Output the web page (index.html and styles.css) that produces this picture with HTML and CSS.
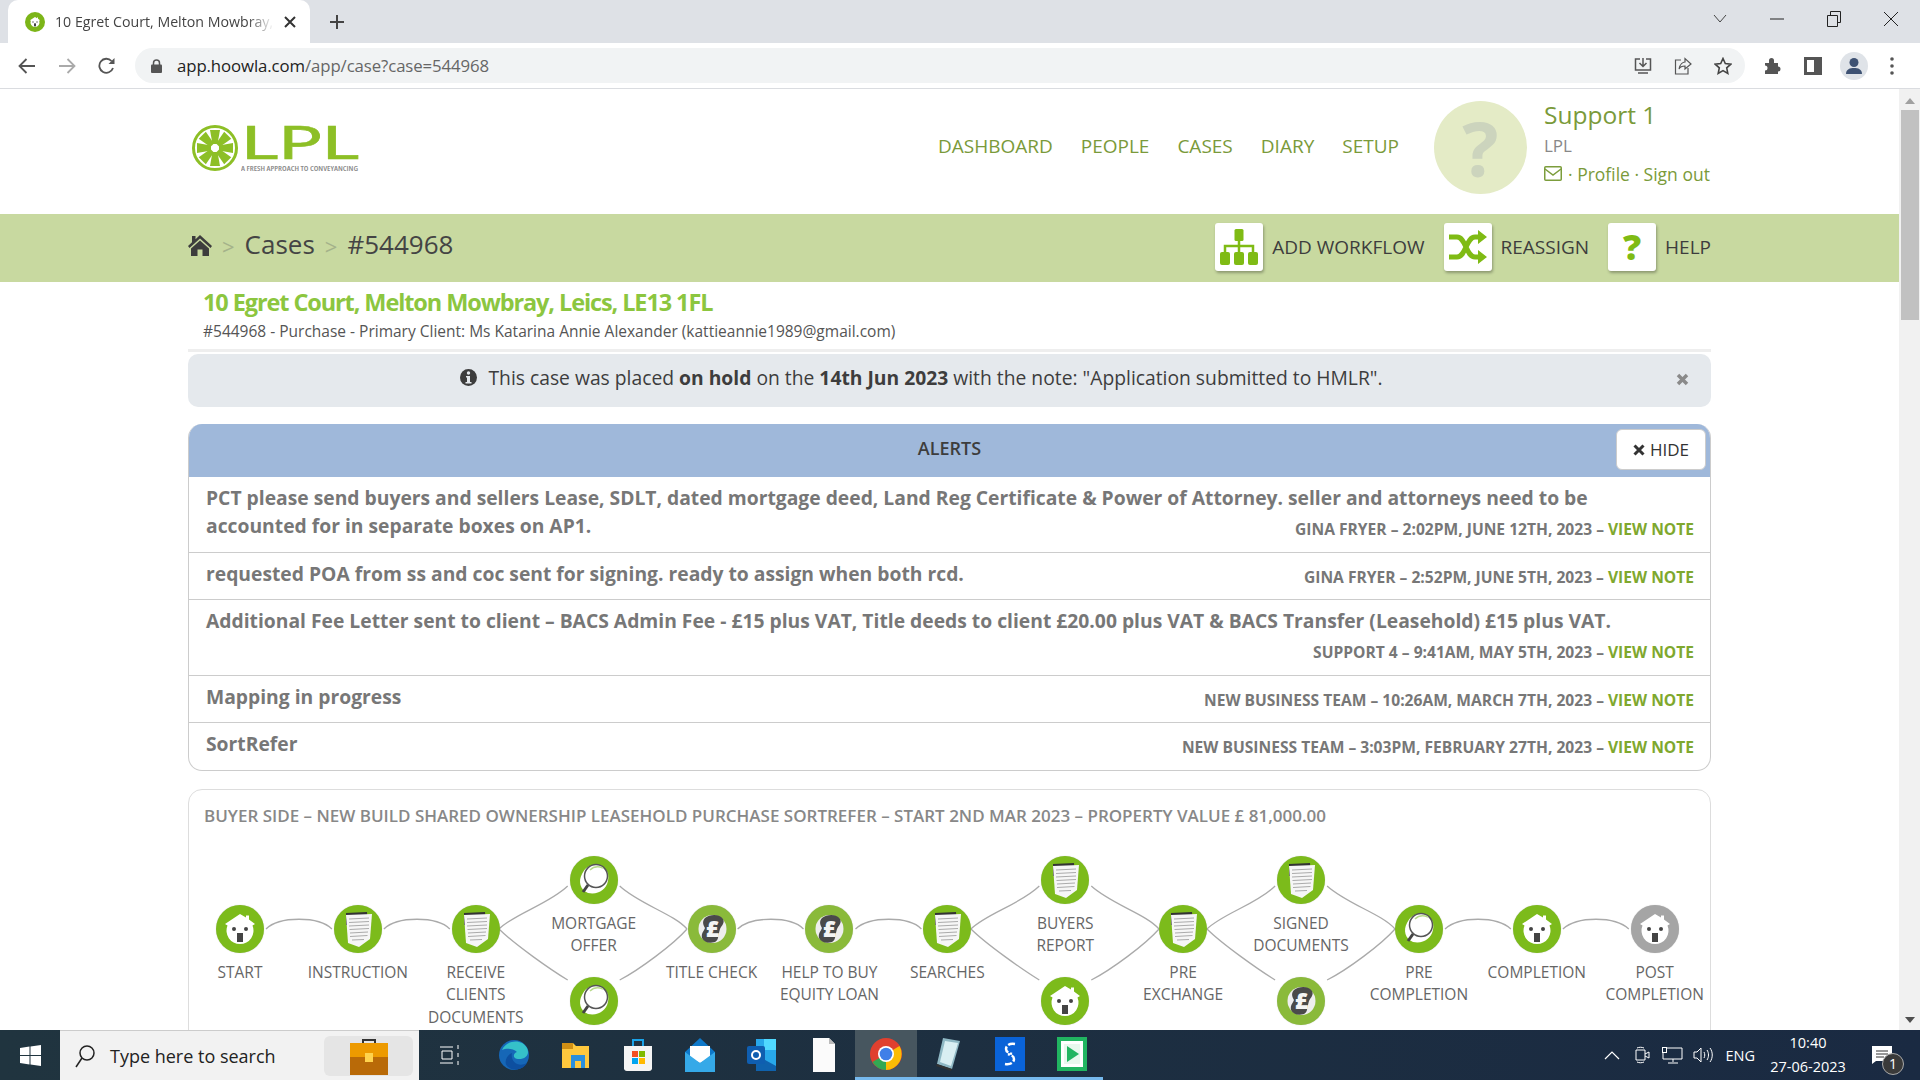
FILE: index.html
```html
<!DOCTYPE html>
<html lang="en">
<head>
    <meta charset="UTF-8">
    <title>10 Egret Court, Melton Mowbray, Leics, LE13 1FL</title>
    <link rel="stylesheet" href="styles.css">
</head>
<body>

    <!-- shared node icons -->
    <svg class="defs" width="0" height="0">
        <symbol id="i-house" viewBox="0 0 48 48">
            <path d="M24 9 30 12.500V10.500H33V14.500L39 19 36.500 20.500A13.500 13.500 0 1 1 11.500 20.500L9 19Z" fill="#fff"/>
            <circle cx="18" cy="24" r="2" fill="#444"/>
            <circle cx="30" cy="24" r="2" fill="#444"/>
            <rect x="21" y="28" width="6" height="9" fill="#444"/>
        </symbol>
        <symbol id="i-doc" viewBox="0 0 48 48">
            <path d="M12 8 33 7 34 20H12Z" fill="#333"/>
            <path d="M12 10 38 9 36 34 25 42 14 38Z" fill="#f6f6f6"/>
            <path d="M15 14 35 13M15 17.500 35 16.500M15 21 35 20M15.500 24.500 35 23.500M16 28 34 27M16 31.500 33.500 30.500M18 35 30 34.500" stroke="#aaa" fill="none"/>
        </symbol>
        <symbol id="i-glass" viewBox="0 0 48 48">
            <path d="M25 9C35 9 40 16 38 25 36 34 28 39 18 37 10 34 8 25 12 18 15 12 19 9 25 9Z" fill="#fff"/>
            <circle cx="26" cy="20" r="11.500" fill="#fff" stroke="#555" stroke-width="1.500"/>
            <path d="M20 14C23 11 28 10 33 12" stroke="#b7d98a" stroke-width="1.500" fill="none"/>
            <path d="M18 29 13 36" stroke="#444" stroke-width="3"/>
        </symbol>
        <symbol id="i-pound" viewBox="0 0 48 48">
            <circle cx="24.500" cy="24" r="14" fill="#eee"/>
            <path d="M17 13C22 9 32 9 35 14 37 18 34 20 32 24 30 30 31 35 27 37 21 39 16 37 14 33 13 28 16 26 17 23 15 20 14 16 17 13Z" fill="#4a4a4a"/>
            <text class="pound" x="24.500" y="32" text-anchor="middle">£</text>
        </symbol>
    </svg>

    <!-- browser chrome -->
    <div class="tabstrip">
        <div class="tab">
            <svg class="favicon" width="20" height="20" viewBox="0 0 20 20"><circle cx="10" cy="10" r="10" fill="#7cb518"/><use href="#i-house" x="2" y="2" width="16" height="16"/></svg>
            <span class="tab-title">10 Egret Court, Melton Mowbray, Leics</span>
            <svg width="12" height="12" viewBox="0 0 12 12"><path d="M1 1 11 11M11 1 1 11" stroke="#333" stroke-width="2"/></svg>
        </div>
        <svg class="newtab" width="16" height="16" viewBox="0 0 16 16"><path d="M8 1V15M1 8H15" stroke="#444" stroke-width="2"/></svg>
        <div class="win-btns">
            <svg width="14" height="10" viewBox="0 0 14 10"><path d="M1 1 7 8 13 1" stroke="#444" fill="none"/></svg>
            <svg width="14" height="2" viewBox="0 0 14 2"><path d="M0 1H14" stroke="#222"/></svg>
            <svg width="14" height="16" viewBox="0 0 14 16"><path d="M.5 4.500H10.500V15.500H.5ZM3.500 4.500V.5H13.500V11.500H10.500" stroke="#222" fill="none"/></svg>
            <svg width="14" height="14" viewBox="0 0 14 14"><path d="M0 0 14 14M14 0 0 14" stroke="#222"/></svg>
        </div>
    </div>

    <div class="toolbar">
        <svg width="18" height="16" viewBox="0 0 18 16"><path d="M17 8H2M8.500 1 1.500 8 8.500 15" stroke="#555" stroke-width="1.800" fill="none"/></svg>
        <svg width="18" height="16" viewBox="0 0 18 16"><path d="M1 8H16M9.500 1 16.500 8 9.500 15" stroke="#aaa" stroke-width="1.800" fill="none"/></svg>
        <svg width="18" height="18" viewBox="0 0 18 18"><path d="M15 11A7 7 0 1 1 13.500 4" stroke="#555" stroke-width="1.800" fill="none"/><path d="M16.500 1V7H10.500Z" fill="#555"/></svg>
        <div class="omnibox">
            <svg width="11" height="14" viewBox="0 0 11 14"><path d="M2.500 6V4A3 3 0 0 1 8.500 4V6" stroke="#555" stroke-width="1.500" fill="none"/><rect y="5.500" width="11" height="8.500" rx="1" fill="#555"/></svg>
            <span class="url"><b>app.hoowla.com</b>/app/case?case=544968</span>
            <span class="omni-icons">
                <svg width="18" height="18" viewBox="0 0 18 18"><path d="M6 2H1.500V13H16.500V2H12M9 1V9M5.500 6 9 9.500 12.500 6M4 16H14" stroke="#555" stroke-width="1.500" fill="none"/></svg>
                <svg width="18" height="18" viewBox="0 0 18 18"><path d="M7 3H1.500V17H14V11M5 12C6 7 9 5 11 5V1.500L17 7 11 12V9C8 9 6 10 5 12Z" stroke="#555" stroke-width="1.200" fill="none"/></svg>
                <svg width="18" height="18" viewBox="0 0 18 18"><path d="M9 1.500 11.300 6.600 16.800 7.200 12.700 10.900 13.800 16.400 9 13.600 4.200 16.400 5.300 10.900 1.200 7.200 6.700 6.600Z" stroke="#444" stroke-width="1.600" fill="none"/></svg>
            </span>
        </div>
        <div class="tool-icons">
            <svg width="18" height="18" viewBox="0 0 18 18"><path d="M1 6H5V3.500A2.500 2.500 0 0 1 10 3.500V6H14V9.500A2.500 2.500 0 0 1 14 14.500V17H1V13.500A2.500 2.500 0 0 0 1 8.500Z" fill="#555"/></svg>
            <svg width="18" height="18" viewBox="0 0 18 18"><path d="M1.500 1.500H16.500V16.500H1.500Z" stroke="#555" stroke-width="3" fill="none"/><rect x="10" y="1" width="7" height="16" fill="#555"/></svg>
            <svg class="profile" width="28" height="28" viewBox="0 0 28 28"><circle cx="14" cy="14" r="14" fill="#dfe3e8"/><circle cx="14" cy="10.500" r="4.500" fill="#3e5273"/><path d="M6 22C6 17 10 16 14 16S22 17 22 22Z" fill="#3e5273"/></svg>
            <svg width="4" height="18" viewBox="0 0 4 18"><circle cx="2" cy="2" r="1.800" fill="#555"/><circle cx="2" cy="9" r="1.800" fill="#555"/><circle cx="2" cy="16" r="1.800" fill="#555"/></svg>
        </div>
    </div>

    <div class="viewport">
        <div class="page">
            <header class="site-head">
                <div class="logo">
                    <svg width="46" height="46" viewBox="0 0 46 46">
                        <circle cx="23" cy="23" r="21.500" fill="#fff" stroke="#8dbf26" stroke-width="3"/>
                        <g fill="#8dbf26">
                            <path d="M20.500 19 18 5H28L25.500 19Z"/>
                            <path d="M20.500 19 18 5H28L25.500 19Z" transform="rotate(45 23 23)"/>
                            <path d="M20.500 19 18 5H28L25.500 19Z" transform="rotate(90 23 23)"/>
                            <path d="M20.500 19 18 5H28L25.500 19Z" transform="rotate(135 23 23)"/>
                            <path d="M20.500 19 18 5H28L25.500 19Z" transform="rotate(180 23 23)"/>
                            <path d="M20.500 19 18 5H28L25.500 19Z" transform="rotate(225 23 23)"/>
                            <path d="M20.500 19 18 5H28L25.500 19Z" transform="rotate(270 23 23)"/>
                            <path d="M20.500 19 18 5H28L25.500 19Z" transform="rotate(315 23 23)"/>
                        </g>
                    </svg>
                    <svg class="logo-text" width="118" height="66" viewBox="0 0 118 66">
                        <text class="logo-name" x="0" y="46" textLength="118" lengthAdjust="spacingAndGlyphs">LPL</text>
                        <text class="logo-tag" x="0" y="58" textLength="117" lengthAdjust="spacingAndGlyphs">A FRESH APPROACH TO CONVEYANCING</text>
                    </svg>
                </div>
                <nav class="mainnav">
                    <a>DASHBOARD</a>
                    <a>PEOPLE</a>
                    <a>CASES</a>
                    <a>DIARY</a>
                    <a>SETUP</a>
                </nav>
                <div class="avatar">?</div>
                <div class="user">
                    <div class="user-name">Support 1</div>
                    <div class="user-org">LPL</div>
                    <div class="user-links">
                        <svg width="18" height="15" viewBox="0 0 18 15"><rect x=".75" y=".75" width="16.500" height="13.500" rx="1" stroke="#7c9d3c" stroke-width="1.500" fill="none"/><path d="M1 3 9 9 17 3" stroke="#7c9d3c" stroke-width="1.500" fill="none"/></svg>
                        <span>· Profile · Sign out</span>
                    </div>
                </div>
            </header>

            <div class="band">
                <div class="wrap band-in">
                    <svg width="24" height="21" viewBox="0 0 24 21"><path d="M12 0 24 11 22.500 13 12 3.500 1.500 13 0 11 4 7.300V1H7.500V4.200Z" fill="#3d3d3d"/><path d="M12 5.500 21 13.500V21H14.500V14.500H9.500V21H3V13.500Z" fill="#3d3d3d"/></svg>
                    <span class="crumb-sep">&gt;</span>
                    <span class="crumb">Cases</span>
                    <span class="crumb-sep">&gt;</span>
                    <span class="crumb">#544968</span>
                    <div class="band-actions">
                        <a class="act">
                            <span class="act-btn"><svg width="38" height="36" viewBox="0 0 38 36"><g fill="#7fbb14"><rect x="14.500" y="0" width="9" height="12" rx="1.500"/><rect x="0" y="23" width="10" height="13" rx="2"/><rect x="14" y="23" width="10" height="13" rx="2"/><rect x="28" y="23" width="10" height="13" rx="2"/></g><path d="M19 12V23M5 23V17H33V23" stroke="#7fbb14" stroke-width="2.500" fill="none"/></svg></span>
                            ADD WORKFLOW
                        </a>
                        <a class="act">
                            <span class="act-btn"><svg width="38" height="34" viewBox="0 0 38 34"><path d="M0 7H8C17 7 17 27 26 27H31M0 27H8C17 27 17 7 26 7H31" stroke="#7fbb14" stroke-width="5" fill="none"/><path d="M29 0 38 7 29 14ZM29 20 38 27 29 34Z" fill="#7fbb14"/></svg></span>
                            REASSIGN
                        </a>
                        <a class="act">
                            <span class="act-btn act-q">?</span>
                            HELP
                        </a>
                    </div>
                </div>
            </div>

            <main class="wrap">
                <div class="case-head">
                    <h1>10 Egret Court, Melton Mowbray, Leics, LE13 1FL</h1>
                    <p>#544968 - Purchase - Primary Client: Ms Katarina Annie Alexander (kattieannie1989@gmail.com)</p>
                </div>

                <div class="hold">
                    <svg width="17" height="17" viewBox="0 0 17 17"><circle cx="8.500" cy="8.500" r="8.500" fill="#3d3d3d"/><circle cx="8.500" cy="4" r="1.700" fill="#e5e9ed"/><path d="M6 7H10V13H11.500V14.500H5.500V13H7V8.500H6Z" fill="#e5e9ed"/></svg>
                    <span>This case was placed <b>on hold</b> on the <b>14th Jun 2023</b> with the note: "Application submitted to HMLR".</span>
                    <svg class="hold-x" width="13" height="13" viewBox="0 0 13 13"><path d="M2 2 11 11M11 2 2 11" stroke="#8a8a8a" stroke-width="3.500"/></svg>
                </div>

                <section class="alerts">
                    <div class="alerts-head">
                        ALERTS
                        <button class="hide-btn"><svg width="12" height="12" viewBox="0 0 12 12"><path d="M1.500 1.500 10.500 10.500M10.500 1.500 1.500 10.500" stroke="#333" stroke-width="3"/></svg> HIDE</button>
                    </div>
                    <div class="alert-row">PCT please send buyers and sellers Lease, SDLT, dated mortgage deed, Land Reg Certificate &amp; Power of Attorney. seller and attorneys need to be<br>accounted for in separate boxes on AP1.<span class="alert-meta">GINA FRYER – 2:02PM, JUNE 12TH, 2023 – <a>VIEW NOTE</a></span></div>
                    <div class="alert-row">requested POA from ss and coc sent for signing. ready to assign when both rcd.<span class="alert-meta">GINA FRYER – 2:52PM, JUNE 5TH, 2023 – <a>VIEW NOTE</a></span></div>
                    <div class="alert-row">Additional Fee Letter sent to client – BACS Admin Fee - £15 plus VAT, Title deeds to client £20.00 plus VAT &amp; BACS Transfer (Leasehold) £15 plus VAT.<span class="alert-meta">SUPPORT 4 – 9:41AM, MAY 5TH, 2023 – <a>VIEW NOTE</a></span></div>
                    <div class="alert-row">Mapping in progress<span class="alert-meta">NEW BUSINESS TEAM – 10:26AM, MARCH 7TH, 2023 – <a>VIEW NOTE</a></span></div>
                    <div class="alert-row">SortRefer<span class="alert-meta">NEW BUSINESS TEAM – 3:03PM, FEBRUARY 27TH, 2023 – <a>VIEW NOTE</a></span></div>
                </section>

                <section class="workflow">
                    <h2>BUYER SIDE – NEW BUILD SHARED OWNERSHIP LEASEHOLD PURCHASE SORTREFER – START 2ND MAR 2023 – PROPERTY VALUE £ 81,000.00</h2>
                    <div class="diagram">
                        <svg class="links" width="1521" height="170" viewBox="0 0 1521 170">
                            <path d="M77 73C90 60 130 60 142.900 73M194.900 73C208 60 248 60 260.800 73M548.600 73C562 60 602 60 614.500 73M666.500 73C680 60 720 60 732.400 73M1256 73C1270 60 1308 60 1321.900 73M1373.900 73C1388 60 1426 60 1439.800 73"/>
                            <path d="M310 73C325 58 360 48 378.700 30M430.700 30C450 48 485 58 498 73M310 73C325 88 362 114 378.700 124M430.700 124C450 114 485 88 498 73"/>
                            <path d="M782 73C797 58 832 48 850.300 30M902.300 30C922 48 957 58 970 73M782 73C797 88 834 114 850.300 124M902.300 124C922 114 957 88 970 73"/>
                            <path d="M1018 73C1033 58 1068 48 1086.100 30M1138.100 30C1158 48 1193 58 1206 73M1018 73C1033 88 1070 114 1086.100 124M1138.100 124C1158 114 1193 88 1206 73"/>
                        </svg>
                        <div class="step"><svg class="node"><use href="#i-house"/></svg><span>START</span></div>
                        <div class="step"><svg class="node"><use href="#i-doc"/></svg><span>INSTRUCTION</span></div>
                        <div class="step"><svg class="node"><use href="#i-doc"/></svg><span>RECEIVE CLIENTS DOCUMENTS</span></div>
                        <div class="step split"><svg class="node"><use href="#i-glass"/></svg><span>MORTGAGE OFFER</span><svg class="node"><use href="#i-glass"/></svg></div>
                        <div class="step"><svg class="node olive"><use href="#i-pound"/></svg><span>TITLE CHECK</span></div>
                        <div class="step"><svg class="node olive"><use href="#i-pound"/></svg><span>HELP TO BUY EQUITY LOAN</span></div>
                        <div class="step"><svg class="node"><use href="#i-doc"/></svg><span>SEARCHES</span></div>
                        <div class="step split"><svg class="node"><use href="#i-doc"/></svg><span>BUYERS REPORT</span><svg class="node"><use href="#i-house"/></svg></div>
                        <div class="step"><svg class="node"><use href="#i-doc"/></svg><span>PRE EXCHANGE</span></div>
                        <div class="step split"><svg class="node"><use href="#i-doc"/></svg><span>SIGNED DOCUMENTS</span><svg class="node olive"><use href="#i-pound"/></svg></div>
                        <div class="step"><svg class="node"><use href="#i-glass"/></svg><span>PRE COMPLETION</span></div>
                        <div class="step"><svg class="node"><use href="#i-house"/></svg><span>COMPLETION</span></div>
                        <div class="step"><svg class="node grey"><use href="#i-house"/></svg><span>POST COMPLETION</span></div>
                    </div>
                </section>
            </main>
        </div>
        <div class="scrollbar">
            <svg width="10" height="6" viewBox="0 0 10 6"><path d="M5 0 10 6H0Z" fill="#a0a0a0"/></svg>
            <div class="thumb"></div>
            <svg width="10" height="6" viewBox="0 0 10 6"><path d="M5 6 0 0H10Z" fill="#505050"/></svg>
        </div>
    </div>

    <!-- windows taskbar -->
    <footer class="taskbar">
        <svg class="start" width="21" height="21" viewBox="0 0 21 21"><path d="M0 3 9.500 1.600V10H0ZM10.500 1.500 21 0V10H10.500ZM0 11H9.500V19.400L0 18ZM10.500 11H21V21L10.500 19.500Z" fill="#fff"/></svg>
        <div class="search">
            <svg width="22" height="24" viewBox="0 0 22 24"><circle cx="13" cy="9" r="7" stroke="#222" stroke-width="1.500" fill="none"/><path d="M8 14 2 23" stroke="#222" stroke-width="1.500"/></svg>
            <span>Type here to search</span>
            <div class="search-promo">
                <svg width="38" height="38" viewBox="0 0 38 38"><path d="M13 7V3H25V7" stroke="#333" stroke-width="2" fill="none"/><rect y="6" width="38" height="14" fill="#ed9a00"/><rect y="20" width="38" height="18" fill="#b96a08"/><rect x="15" y="16" width="8" height="9" fill="#ffd34d"/></svg>
            </div>
        </div>
        <div class="tasks">
            <span class="task"><svg width="22" height="22" viewBox="0 0 22 22"><path d="M1 3H14M1 19H14M3 7H13V15H3ZM19 1V5M19 9V13M19 17V21" stroke="#fff" fill="none"/></svg></span>
            <span class="task"><svg width="32" height="32" viewBox="0 0 32 32"><circle cx="16" cy="16" r="15" fill="#1667b7"/><path d="M4 11C8 1 24-1 29 9 32 15 28 20 21 20 14 20 15 14 19 13 15 9 8 9 4 11Z" fill="#35c1c9"/><path d="M14 14C12 22 20 29 29 24 25 31 15 33 9 27 6 24 8 16 14 14Z" fill="#0d4fa0"/></svg></span>
            <span class="task"><svg width="30" height="30" viewBox="0 0 30 30"><path d="M1 3H12L15 6H28V28H1Z" fill="#ffc83d"/><path d="M1 3H12V9H1Z" fill="#d18f14"/><rect x="10" y="15" width="14" height="13" fill="#2b8fdd"/><rect x="14" y="21" width="6" height="7" fill="#ffc83d"/></svg></span>
            <span class="task"><svg width="30" height="34" viewBox="0 0 30 34"><path d="M10 8V2H20V8" stroke="#1aa3e8" stroke-width="2" fill="none"/><path d="M1 8H29V31A3 3 0 0 1 26 33H4A3 3 0 0 1 1 31Z" fill="#f4f4f4"/><rect x="9" y="13" width="6" height="6" fill="#f25022"/><rect x="16" y="13" width="6" height="6" fill="#7fba00"/><rect x="9" y="20" width="6" height="6" fill="#00a4ef"/><rect x="16" y="20" width="6" height="6" fill="#ffb900"/></svg></span>
            <span class="task"><svg width="30" height="34" viewBox="0 0 30 34"><path d="M15 0 30 14V34H0V14Z" fill="#0e78c9"/><path d="M5 8H25V20L15 25 5 20Z" fill="#fff"/><path d="M0 14 15 25 30 14V34H0Z" fill="#35a9e8"/></svg></span>
            <span class="task"><svg width="30" height="34" viewBox="0 0 30 34"><path d="M9 1H29V33H9Z" fill="#28a8ea"/><path d="M17 1H29V12H17Z" fill="#50d9ff"/><path d="M9 17 29 28V33H9Z" fill="#0f62ad"/><rect y="8" width="18" height="18" rx="2" fill="#0f5eb0"/><circle cx="9" cy="17" r="4" stroke="#fff" stroke-width="2" fill="none"/></svg></span>
            <span class="task"><svg width="22" height="34" viewBox="0 0 22 34"><path d="M0 0H16L22 6V34H0Z" fill="#fbfbfb"/><path d="M16 0V6H22Z" fill="#bbb"/></svg></span>
            <span class="task active"><svg width="32" height="32" viewBox="0 0 32 32"><circle cx="16" cy="16" r="16" fill="#e0402f"/><path d="M16 16 2.500 24A16 16 0 0 0 16 32Z" fill="#33a853"/><path d="M16 16 29.500 8A16 16 0 0 1 16 32Z" fill="#fbbc05"/><circle cx="16" cy="16" r="8" fill="#fff"/><circle cx="16" cy="16" r="6.300" fill="#3f7fe8"/></svg></span>
            <span class="task open"><svg width="26" height="34" viewBox="0 0 26 34"><path d="M8 1 25 4 17 32 2 27Z" fill="#8fb8c4"/><path d="M10 4 23 6 16 29 5 25Z" fill="#d9eef2"/><path d="M2 27 17 32 16 34 1 29Z" fill="#333"/></svg></span>
            <span class="task open"><svg width="30" height="34" viewBox="0 0 30 34"><rect width="30" height="34" fill="#0a63d8"/><path d="M20 7C14 6 11 9 11 12 11 15 14 16 17 17M10 27C16 28 19 25 19 22 19 19 16 18 13 17" stroke="#fff" stroke-width="2.500" stroke-dasharray="7 2" fill="none"/></svg></span>
            <span class="task open"><svg width="30" height="34" viewBox="0 0 30 34"><rect width="30" height="34" fill="#21b561"/><rect x="4" y="4" width="22" height="26" fill="#fff"/><rect x="7" y="7" width="16" height="20" fill="#e8f8ee"/><path d="M10 9 22 17 10 25Z" fill="#21b561"/></svg></span>
        </div>
        <div class="tray">
            <svg class="tr-chev" width="16" height="10" viewBox="0 0 16 10"><path d="M1 9 8 2 15 9" stroke="#fff" stroke-width="1.200" fill="none"/></svg>
            <svg class="tr-cam" width="15" height="18" viewBox="0 0 15 18"><path d="M1 4H10V14H1ZM10 8 14 6V12L10 10M2 2C4 1 7 1 9 2M2 16C4 17 7 17 9 16" stroke="#fff" fill="none"/></svg>
            <svg class="tr-net" width="21" height="17" viewBox="0 0 21 17"><path d="M4 1H20V12H1V5M11 12V15M6 16H16" stroke="#fff" fill="none"/><rect x=".5" y=".5" width="4" height="5" stroke="#fff" fill="#1a2c42"/></svg>
            <svg class="tr-vol" width="20" height="16" viewBox="0 0 20 16"><path d="M1 5H4L8 1V15L4 11H1ZM11 5C12 7 12 9 11 11M14 3C16 6 16 10 14 13M17 1C20 5 20 11 17 15" stroke="#fff" fill="none"/></svg>
            <span class="tr-lang">ENG</span>
            <div class="clock"><span>10:40</span><span>27-06-2023</span></div>
            <div class="notif">
                <svg width="20" height="18" viewBox="0 0 20 18"><path d="M0 0H20V15H4L0 18Z" fill="#fff"/><path d="M4 5H16M4 8H16M4 11H12" stroke="#333"/></svg>
                <span class="notif-count">1</span>
            </div>
        </div>
    </footer>

</body>
</html>
```

FILE: styles.css
```css
html, body { margin: 0; height: 100%; overflow: hidden; }
body { display: flex; flex-direction: column; font-family: "Open Sans", sans-serif; color: #555; background: #fff; }
svg { flex: none; display: block; }
a { text-decoration: none; }
.defs { position: absolute; }
.pound { font: 800 23px "Open Sans", sans-serif; fill: #f4f4f4; }

/* browser chrome */
.tabstrip { height: 43px; flex: none; background: #dee1e6; display: flex; align-items: flex-end; position: relative; }
.tab { width: 302px; height: 43px; margin-left: 8px; box-sizing: border-box; padding: 0 14px 0 17px; background: #fff; border-radius: 10px 10px 0 0; display: flex; align-items: center; gap: 10px; }
.tab-title { flex: 1; font-size: 14.200px; color: #444; white-space: nowrap; overflow: hidden; -webkit-mask-image: linear-gradient(90deg, #000 88%, transparent); mask-image: linear-gradient(90deg, #000 88%, transparent); }
.newtab { margin: 0 0 13px 19px; }
.win-btns { margin-left: auto; height: 38px; align-self: flex-start; display: flex; align-items: center; gap: 43px; padding-right: 22px; }
.toolbar { height: 46px; flex: none; box-sizing: border-box; background: #fff; border-bottom: 1px solid #dadce0; display: flex; align-items: center; padding: 0 0 0 18px; gap: 22px; }
.omnibox { width: 1610px; height: 35px; margin-left: -3px; box-sizing: border-box; background: #f1f3f4; border-radius: 18px; display: flex; align-items: center; padding: 0 13px 0 16px; gap: 15px; }
.url { font-size: 16.800px; color: #666; letter-spacing: -.1px; }
.url b { font-weight: 400; color: #222; }
.omni-icons { margin-left: auto; display: flex; gap: 22px; }
.tool-icons { margin-left: -3px; display: flex; align-items: center; gap: 22px; }
.tool-icons .profile { margin: 0 0 0 -4px; }

/* page */
.viewport { flex: 1; min-height: 0; display: flex; }
.page { flex: 1; min-width: 0; overflow: hidden; }
.scrollbar { width: 21px; flex: none; background: #f1f1f1; display: flex; flex-direction: column; align-items: center; justify-content: space-between; padding: 9px 0 7px; box-sizing: border-box; }
.thumb { width: 18px; height: 210px; margin-top: 6px; margin-bottom: auto; background: #c1c1c1; }
.wrap { width: 1523px; margin: 0 auto; }

.site-head { width: 1523px; height: 125px; margin: 0 auto; display: flex; align-items: center; }
.logo { display: flex; margin: 0 0 0 4px; gap: 3px; align-items: flex-start; }
.logo-text { margin-top: -12px; }
.logo-name { font: 400 47px Lato, sans-serif; fill: #8dbf26; stroke: #8dbf26; stroke-width: .6px; }
.logo-tag { font: 600 7.500px "Open Sans", sans-serif; font-stretch: 75%; fill: #8a8a8a; }
.mainnav { margin: 0 35px 12px auto; display: flex; gap: 28px; }
.mainnav a { font-size: 19px; color: #7a9a3a; }
.avatar { width: 93px; height: 93px; border-radius: 50%; background: #e4ebc6; color: #ccd4bd; font: 700 76px/93px "Open Sans", sans-serif; text-align: center; margin: 0 17px 8px 0; }
.user { width: 167px; color: #7a9a3a; margin-bottom: 18px; }
.user-name { font-size: 24.500px; line-height: 34px; }
.user-org { font-size: 17px; line-height: 28px; color: #888; }
.user-links { display: flex; align-items: center; gap: 6px; font-size: 17.500px; line-height: 28px; }

.band { height: 68px; background: #c8d9a0; }
.band-in { height: 100%; display: flex; align-items: center; color: #3d3d3d; }
.band-in > svg { margin-bottom: 5px; }
.crumb { font-size: 26px; margin-bottom: 8px; margin-left: 1px; color: #444; }
.crumb-sep { font-size: 22px; color: #a4b28a; margin: 0 9px 5px 10px; }
.band-actions { margin-left: auto; display: flex; gap: 19px; }
.act { display: flex; align-items: center; gap: 9px; font-size: 19px; color: #3d3d3d; padding-bottom: 3px; }
.act-btn { width: 48px; height: 48px; border-radius: 3px; background: #fff; box-shadow: 1px 2px 3px rgba(0,0,0,.3); display: flex; align-items: center; justify-content: center; }
.act-q { font: 800 36px/48px "Open Sans", sans-serif; color: #7fbb14; }

.case-head { padding: 0 15px; height: 67px; border-bottom: 3px solid #eee; box-sizing: content-box; }
.case-head h1 { margin: 0; padding-top: 4px; font-size: 23.500px; line-height: 33px; font-weight: 700; letter-spacing: -1.100px; color: #8cc63f; white-space: nowrap; }
.case-head p { margin: 0; font-size: 15.500px; line-height: 24px; color: #555; }
.hold { position: relative; margin-top: 2px; height: 53px; background: #e5e9ed; border-radius: 10px; display: flex; align-items: center; justify-content: center; gap: 11px; font-size: 19.300px; color: #3d3d3d; padding: 0 56px 6px 0; box-sizing: border-box; }
.hold-x { position: absolute; right: 22px; top: 19px; }

.alerts { margin-top: 17px; border: 1px solid #ccc; border-top: 0; border-radius: 14px; overflow: hidden; }
.alerts-head { height: 53px; position: relative; background: #9fb8da; text-align: center; font-size: 18px; font-weight: 600; line-height: 48px; color: #3d3d3d; }
.hide-btn { position: absolute; right: 4px; top: 5px; height: 41px; width: 90px; padding: 0; border: 1px solid #ccc; border-radius: 6px; background: #fff; font: 400 17px "Open Sans", sans-serif; color: #333; display: flex; align-items: center; justify-content: center; gap: 5px; }
.alert-row { display: flow-root; padding: 7px 16px 11.500px 17px; font-size: 19.300px; line-height: 28px; font-weight: 700; color: #777; border-top: 1px solid #ccc; }
.alerts-head + .alert-row { border-top: 0; }
.alert-meta { float: right; font-size: 15.600px; font-weight: 700; line-height: 28px; color: #777; margin: 3px 0 -3px 12px; }
.alert-meta a { color: #7fa82e; }

.workflow { margin-top: 18px; height: 300px; border: 1px solid #ddd; border-radius: 14px; }
.workflow h2 { margin: 0; padding: 14px 15px 0; font-size: 17px; line-height: 24px; font-weight: 600; color: #888; }
.diagram { position: relative; margin: 28px 0 0 -1px; display: grid; grid-template-columns: repeat(13, 104px); column-gap: 13.900px; align-items: start; }
.links { position: absolute; left: 1px; top: 0; overflow: visible; }
.links path { fill: none; stroke: #aaa; stroke-width: 1.300; }
.step { position: relative; display: flex; flex-direction: column; align-items: center; padding-top: 49px; text-align: center; font-size: 15.500px; line-height: 22.500px; color: #666; }
.step.split { padding-top: 0; }
.step span { margin-top: 8px; }
.step.split .node + span + .node { margin-top: 20px; }
.node { width: 48px; height: 48px; border-radius: 50%; background: #7cbb1b; box-shadow: 0 0 1px rgba(0,0,0,.25); }
.node.olive { background: #8aba3a; }
.node.grey { background: #a5a5a5; }

/* windows taskbar */
.taskbar { height: 50px; flex: none; display: flex; align-items: center; background: linear-gradient(90deg, #20343f, #1a2a42); color: #fff; }
.start { margin: 0 19px 0 20px; }
.search { width: 359px; height: 50px; box-sizing: border-box; background: #f2f2f2; border-top: 1px solid #ccc; display: flex; align-items: center; padding: 0 6px 0 14px; color: #222; font-size: 18px; }
.search span { margin-left: 14px; }
.search-promo { margin-left: auto; width: 89px; height: 40px; border-radius: 6px; background: #e5e5e5; display: flex; align-items: center; justify-content: center; }
.tasks { display: flex; }
.task { width: 62px; height: 50px; box-sizing: border-box; display: flex; align-items: center; justify-content: center; }
.task:first-child { margin-right: 2px; }
.task.active { background: #47565f; border-bottom: 3px solid #76b9ed; }
.task.open { border-bottom: 3px solid #76b9ed; }
.tray { margin-left: auto; display: flex; align-items: center; font-size: 14.500px; }
.tr-chev { margin-right: 15px; }
.tr-cam { margin-right: 12px; }
.tr-net { margin-right: 10px; }
.tr-vol { margin-right: 12px; }
.tr-lang { margin-right: 13px; }
.clock { width: 80px; display: flex; flex-direction: column; align-items: center; line-height: 24px; margin-right: 20px; white-space: nowrap; }
.notif { position: relative; width: 40px; margin-right: 12px; padding-left: 4px; box-sizing: border-box; }
.notif-count { position: absolute; left: 14px; top: 7px; width: 20px; height: 20px; border-radius: 50%; background: #3a3a3a; border: 1px solid #aaa; text-align: center; font-size: 14px; line-height: 20px; }
```
